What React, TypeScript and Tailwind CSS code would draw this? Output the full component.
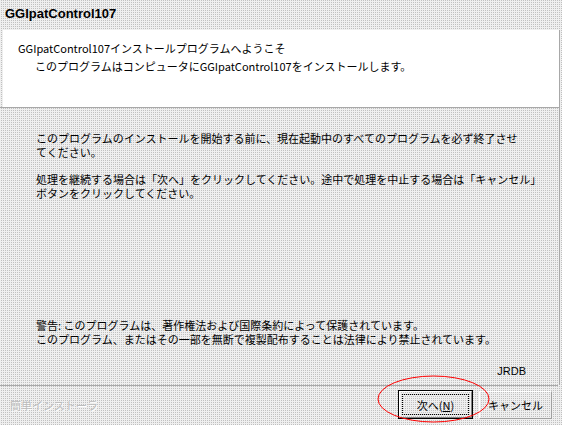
import React from 'react';

const jp = "font-['Noto_Sans_CJK_JP','Liberation_Sans',sans-serif]";
const dither = 'bg-[conic-gradient(#c0c0c0_25%,#efefef_0)] bg-size-[2px_2px]';

const App: React.FC = () => {
  return (
    <div className={`relative w-[562px] h-[425px] overflow-hidden text-black ${dither} ${jp}`}>
      {/* title strip */}
      <div className="h-[30px] pl-[5px] pt-[6px] text-[13px] leading-[16px] font-bold font-['Liberation_Sans',sans-serif]">
        GGIpatControl107
      </div>

      <div className="w-[560px] border-r border-[#a8a8a8]">
        {/* white welcome panel */}
        <div className="ml-[3px] h-[77px] bg-white pt-[11px] text-[11px] leading-[14px] whitespace-nowrap">
          <div className="pl-[15px]">GGIpatControl107インストールプログラムへようこそ</div>
          <div className="pl-[32px] mt-[4px]">このプログラムはコンピュータにGGIpatControl107をインストールします。</div>
        </div>
        <div className="h-px bg-[#a8a8a8]" />

        {/* body */}
        <div className="h-[277px] flex flex-col pl-[36px] pt-[23px] pb-[7px] text-[11px] leading-[14px] whitespace-nowrap">
          <div>このプログラムのインストールを開始する前に、現在起動中のすべてのプログラムを必ず終了させ</div>
          <div>てください。</div>
          <div className="mt-[13px]">処理を継続する場合は「次へ」をクリックしてください。途中で処理を中止する場合は「キャンセル」</div>
          <div>ボタンをクリックしてください。</div>

          <div className="mt-auto">警告: このプログラムは、著作権法および国際条約によって保護されています。</div>
          <div>このプログラム、またはその一部を無断で複製配布することは法律により禁止されています。</div>
          <div className="mt-[18px] self-end pr-[33px] font-['Liberation_Sans',sans-serif]">JRDB</div>
        </div>
      </div>
      <div className="w-[558px] h-px bg-[#a8a8a8]" />

      {/* footer */}
      <div className="flex items-center h-[37px] w-[558px] pl-[10px] text-[11px] leading-[14px]">
        <div className="text-[#bdbdbd] [text-shadow:1px_1px_0_#ffffff]">簡単インストーラ</div>
        <div className="ml-auto flex items-center gap-[6px] pr-[6px]">
          <div className="w-[75px] h-[29px] border border-black">
            <div className="h-full border border-t-white border-l-white border-r-[#808080] border-b-[#808080] p-[2px]">
              <div className="h-full flex items-center justify-center border border-dotted border-black">
                次へ(<span className="underline">N</span>)
              </div>
            </div>
          </div>
          <div className="w-[73px] h-[28px] flex items-center justify-center border border-t-white border-l-white border-r-[#a0a0a0] border-b-[#a0a0a0]">
            キャンセル
          </div>
        </div>
      </div>

      {/* red annotation circle */}
      <svg className="absolute left-[377px] top-[375px]" width="113" height="48" viewBox="0 0 113 48">
        <ellipse cx="56.5" cy="24" rx="55.5" ry="23" fill="none" stroke="#ff0000" strokeWidth="1" />
      </svg>
    </div>
  );
};

export default App;
